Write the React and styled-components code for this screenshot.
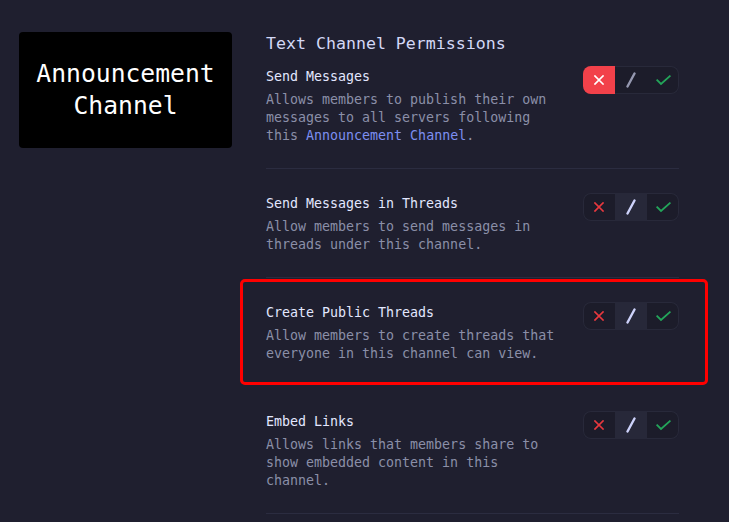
import React from "react";
import styled, { createGlobalStyle, css } from "styled-components";

const Global = createGlobalStyle`
  html, body { margin: 0; padding: 0; background: #1f1f2f; }
  body { font-family: "DejaVu Sans Mono", "Liberation Mono", monospace; }
  #root { min-height: 522px; }
`;

const Page = styled.div`
  display: grid;
  grid-template-columns: 213px 413px;
  column-gap: 34px;
  align-items: start;
  padding: 32px 0 0 19px;
  min-height: 522px;
  box-sizing: border-box;
  background: #1f1f2f;
`;

const ChannelCard = styled.div`
  height: 116px;
  background: #000;
  border-radius: 4px;
  display: flex;
  align-items: center;
  justify-content: center;
  text-align: center;
  color: #fff;
  font-size: 24.7px;
  line-height: 32px;
`;

const Section = styled.section`
  display: flex;
  flex-direction: column;
  padding-top: 1px;
`;

const Heading = styled.h2`
  margin: 0;
  font-weight: normal;
  font-size: 16.6px;
  line-height: 22px;
  color: #d3d8f6;
`;

const Row = styled.div`
  position: relative;
  display: flex;
  align-items: flex-start;
  gap: 16px;
  padding: ${(p) => (p.$first ? "13px" : "26px")} 0 23px;
  border-bottom: 1px solid #2b2c40;
  ${(p) =>
    p.$highlight &&
    css`
      border-bottom-color: transparent;
      &::after {
        content: "";
        position: absolute;
        top: 1px;
        bottom: 1px;
        left: -26px;
        right: -29px;
        border: 3px solid #ff0000;
        border-radius: 5px;
        pointer-events: none;
      }
    `}
`;

const Info = styled.div`
  flex: 1;
  min-width: 0;
`;

const Title = styled.div`
  font-size: 13.3px;
  line-height: 18px;
  color: #e3e7ff;
`;

const Desc = styled.p`
  margin: 5px 0 0;
  font-size: 13.3px;
  line-height: 18px;
  color: #8b8fa8;
`;

const Link = styled.span`
  color: #7d8ff2;
`;

const Toggle = styled.div`
  flex: none;
  display: flex;
  width: 96px;
  height: 28px;
  margin-top: -2px;
  border-radius: 8px;
  overflow: hidden;
  background: #1c1c2a;
  box-shadow: inset 0 0 0 1px #28293a;
`;

const Segment = styled.div`
  width: 32px;
  height: 100%;
  display: flex;
  align-items: center;
  justify-content: center;
  background: ${(p) => p.$bg || "transparent"};
`;

const XIcon = ({ color }) => (
  <svg width="10" height="10" viewBox="0 0 10 10">
    <path d="M1 1 L9 9 M9 1 L1 9" stroke={color} strokeWidth="1.7" strokeLinecap="square" fill="none" />
  </svg>
);

const SlashIcon = ({ color }) => (
  <svg width="12" height="16" viewBox="0 0 12 16">
    <path d="M2.5 14.5 L9.5 1.5" stroke={color} strokeWidth="2.4" strokeLinecap="round" fill="none" />
  </svg>
);

const CheckIcon = ({ color }) => (
  <svg width="15" height="11" viewBox="0 0 15 11">
    <path d="M1.2 5.2 L5 9 L13.8 1.2" stroke={color} strokeWidth="1.8" strokeLinecap="square" fill="none" />
  </svg>
);

function PermToggle({ value }) {
  const deny = value === "deny";
  const neutral = value === "neutral";
  return (
    <Toggle>
      <Segment $bg={deny ? "#f2414a" : undefined}>
        <XIcon color={deny ? "#ffffff" : "#e8383e"} />
      </Segment>
      <Segment $bg={neutral ? "#272839" : undefined}>
        <SlashIcon color={neutral ? "#cdd2fa" : "#9598b0"} />
      </Segment>
      <Segment>
        <CheckIcon color="#23a55a" />
      </Segment>
    </Toggle>
  );
}

const perms = [
  {
    title: "Send Messages",
    desc: (
      <>
        Allows members to publish their own messages to all servers following this{" "}
        <Link>Announcement Channel</Link>.
      </>
    ),
    value: "deny",
  },
  {
    title: "Send Messages in Threads",
    desc: "Allow members to send messages in threads under this channel.",
    value: "neutral",
  },
  {
    title: "Create Public Threads",
    desc: "Allow members to create threads that everyone in this channel can view.",
    value: "neutral",
    highlight: true,
  },
  {
    title: "Embed Links",
    desc: "Allows links that members share to show embedded content in this channel.",
    value: "neutral",
  },
];

export default function App() {
  return (
    <>
      <Global />
      <Page>
        <ChannelCard>
          Announcement
          <br />
          Channel
        </ChannelCard>
        <Section>
          <Heading>Text Channel Permissions</Heading>
          {perms.map((p, i) => (
            <Row key={p.title} $first={i === 0} $highlight={p.highlight}>
              <Info>
                <Title>{p.title}</Title>
                <Desc>{p.desc}</Desc>
              </Info>
              <PermToggle value={p.value} />
            </Row>
          ))}
        </Section>
      </Page>
    </>
  );
}
